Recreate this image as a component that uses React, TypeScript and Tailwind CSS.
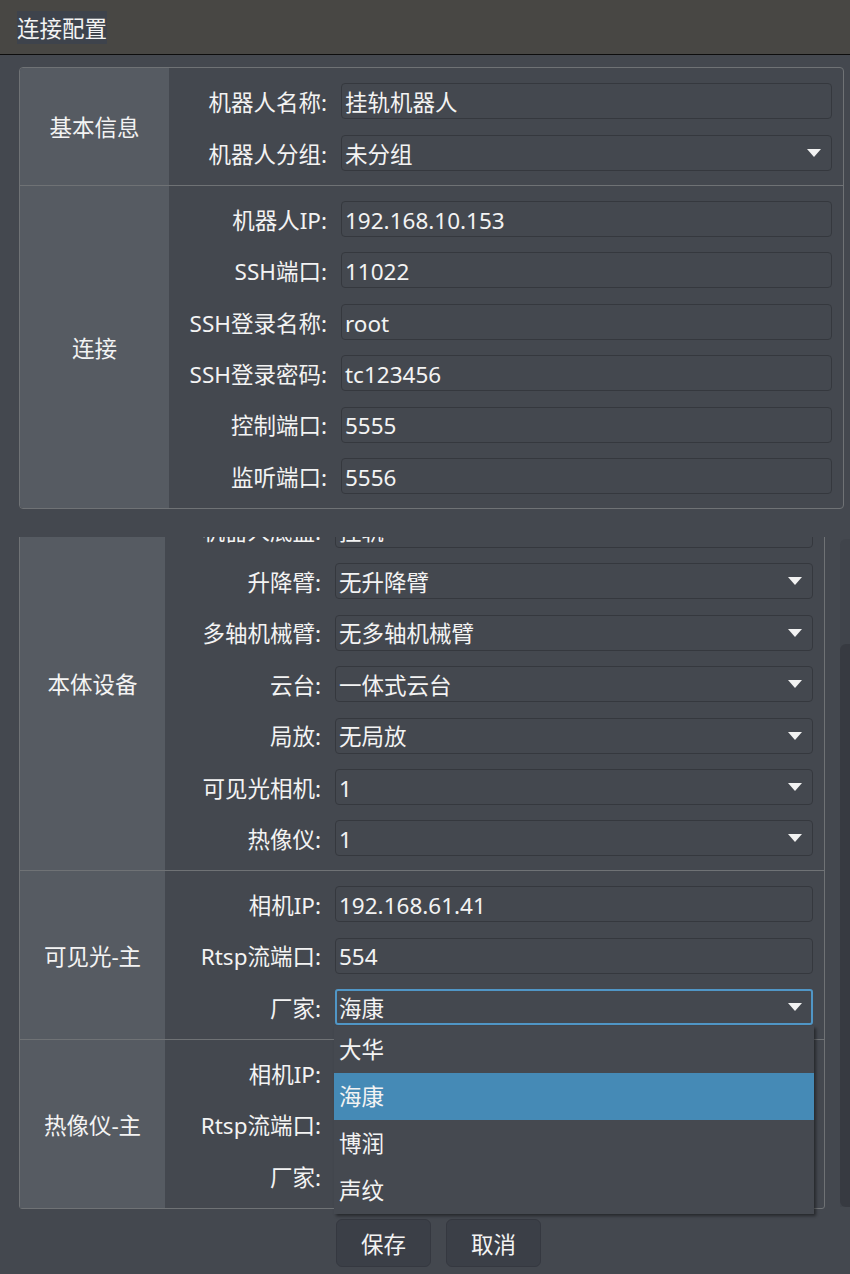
import type { ReactNode } from "react";

const FONT = "font-['Noto_Sans','Noto_Sans_CJK_SC',sans-serif]";

interface FieldProps {
  label: string;
  value: string;
  select?: boolean;
  focused?: boolean;
  labelClass: string;
}

function Arrow() {
  return (
    <span className="-mt-[4px] w-0 h-0 border-l-[7px] border-r-[7px] border-t-[8px] border-l-transparent border-r-transparent border-t-[#f2f2f2]" />
  );
}

function Field({ label, value, select, focused, labelClass }: FieldProps) {
  return (
    <div className="flex items-center h-[36px]">
      <div className={`${labelClass} shrink-0 pt-[4px] text-right whitespace-nowrap`}>{label}</div>
      <div
        className={
          focused
            ? "ml-[14px] flex-1 h-full flex items-center justify-between rounded-[3px] border-2 border-[#5096c6] pt-[4px] pl-[2px] pr-[9px]"
            : "ml-[14px] flex-1 h-full flex items-center justify-between rounded-[4px] border border-[#35383e] pt-[4px] pl-[3px] pr-[10px]"
        }
      >
        <span className="whitespace-nowrap">{value}</span>
        {select && <Arrow />}
      </div>
    </div>
  );
}

interface SectionProps {
  title: string;
  colClass: string;
  gapClass?: string;
  first?: boolean;
  children: ReactNode;
}

function Section({ title, colClass, gapClass = "gap-[15.4px]", first, children }: SectionProps) {
  return (
    <div className={first ? "flex" : "flex border-t border-[#6f7275]"}>
      <div className={`${colClass} shrink-0 pt-[4px] bg-[#565b62] flex items-center justify-center`}>{title}</div>
      <div className={`flex-1 flex flex-col ${gapClass} pt-[15px] pb-[14px] pr-[11px]`}>{children}</div>
    </div>
  );
}

const TOP = "w-[158px]";
const LOW = "w-[156px]";

export default function App() {
  return (
    <div className={`${FONT} relative min-h-screen bg-[#44484f] text-[22.5px] text-[#f3f3f3] leading-none`}>
      <div className="h-[55px] flex items-center pl-[17px] bg-[#484744] border-b border-[#0d0d0d]">
        <span className="bg-[#3e434c] pt-[3px] leading-[30px]">连接配置</span>
      </div>

      <div className="mt-[12px] ml-[19px] mr-[6px] rounded-[4px] border border-[#6f7275] overflow-hidden">
        <Section title="基本信息" colClass="w-[149px]" gapClass="gap-[16px]" first>
          <Field labelClass={TOP} label="机器人名称:" value="挂轨机器人" />
          <Field labelClass={TOP} label="机器人分组:" value="未分组" select />
        </Section>
        <Section title="连接" colClass="w-[149px]">
          <Field labelClass={TOP} label="机器人IP:" value="192.168.10.153" />
          <Field labelClass={TOP} label="SSH端口:" value="11022" />
          <Field labelClass={TOP} label="SSH登录名称:" value="root" />
          <Field labelClass={TOP} label="SSH登录密码:" value="tc123456" />
          <Field labelClass={TOP} label="控制端口:" value="5555" />
          <Field labelClass={TOP} label="监听端口:" value="5556" />
        </Section>
      </div>

      <div className="mt-[28px] flex pl-[19px]">
        <div
          className="w-[806px] h-[672px] overflow-hidden"
          ref={(el) => {
            if (el) el.scrollTop = 108;
          }}
        >
          <div className="border border-[#6f7275] rounded-[3px]">
            <div className="flex">
              <div className="w-[145px] shrink-0 bg-[#565b62] flex items-center justify-center">底盘</div>
              <div className="flex-1 flex flex-col pt-[16px] pb-[14px] pr-[10px]">
                <Field labelClass={LOW} label="底盘类型:" value="挂轨" select />
              </div>
            </div>
            <Section title="本体设备" colClass="w-[145px]">
              <Field labelClass={LOW} label="机器人底盘:" value="挂轨" select />
              <Field labelClass={LOW} label="升降臂:" value="无升降臂" select />
              <Field labelClass={LOW} label="多轴机械臂:" value="无多轴机械臂" select />
              <Field labelClass={LOW} label="云台:" value="一体式云台" select />
              <Field labelClass={LOW} label="局放:" value="无局放" select />
              <Field labelClass={LOW} label="可见光相机:" value="1" select />
              <Field labelClass={LOW} label="热像仪:" value="1" select />
            </Section>
            <Section title="可见光-主" colClass="w-[145px]">
              <Field labelClass={LOW} label="相机IP:" value="192.168.61.41" />
              <Field labelClass={LOW} label="Rtsp流端口:" value="554" />
              <Field labelClass={LOW} label="厂家:" value="海康" select focused />
            </Section>
            <Section title="热像仪-主" colClass="w-[145px]">
              <Field labelClass={LOW} label="相机IP:" value="192.168.61.42" />
              <Field labelClass={LOW} label="Rtsp流端口:" value="554" />
              <Field labelClass={LOW} label="厂家:" value="大华" select />
            </Section>
          </div>
        </div>
        <div className="ml-[15px] mt-[2px] w-[10px] h-[668px] flex flex-col rounded-tl-[6px] bg-[#40444b]">
          <div className="h-[105px]" />
          <div className="flex-1 rounded-l-[6px] bg-[#373a41]" />
        </div>
      </div>

      <div className="mt-[10px] pl-[336px] flex gap-[15px]">
        <button className="w-[95px] h-[48px] pt-[4px] rounded-[6px] bg-[#3b3f47] border border-[#353840] text-[#f3f3f3]">保存</button>
        <button className="w-[95px] h-[48px] pt-[4px] rounded-[6px] bg-[#3b3f47] border border-[#353840] text-[#f3f3f3]">取消</button>
      </div>

      <div className="absolute left-[334px] top-[1026px] w-[480px] bg-[#454950] shadow-[2px_2px_3px_rgba(0,0,0,0.45)]">
        {["大华", "海康", "博润", "声纹"].map((v) => (
          <div
            key={v}
            className={v === "海康" ? "h-[47px] pt-[2px] flex items-center pl-[5px] bg-[#458ab6]" : "h-[47px] pt-[2px] flex items-center pl-[5px]"}
          >
            {v}
          </div>
        ))}
      </div>
    </div>
  );
}
